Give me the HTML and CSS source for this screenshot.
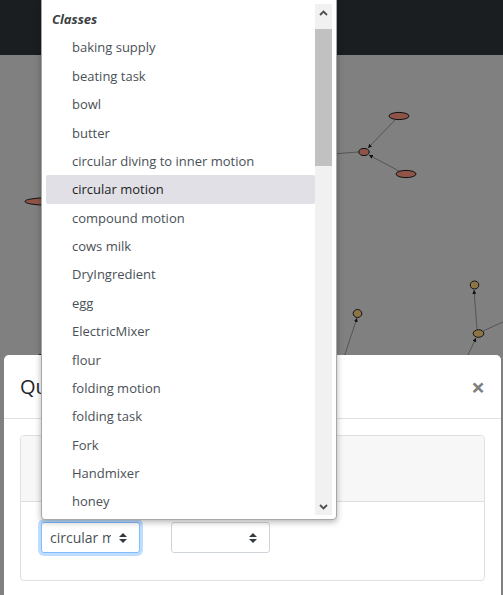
FILE: index.html
```html
<!DOCTYPE html>
<html lang="en">
<head>
<meta charset="utf-8">
<title>Query</title>
<link rel="stylesheet" href="styles.css">
</head>
<body>
<div class="app">
  <header class="navbar"></header>
  <main class="canvas">
    <svg class="graph" width="503" height="540" viewBox="0 55 503 540">
      <defs>
        <marker id="arr" viewBox="0 0 6 6" refX="6" refY="3" markerWidth="4" markerHeight="4" orient="auto">
          <path d="M0 0L6 3L0 6z" fill="#111"/>
        </marker>
      </defs>
      <g class="edges">
        <line x1="395" y1="120" x2="368" y2="148" marker-end="url(#arr)"/>
        <line x1="399" y1="171" x2="369" y2="155" marker-end="url(#arr)"/>
        <line x1="358" y1="152" x2="320" y2="155"/>
        <line x1="344" y1="357" x2="357" y2="318" marker-end="url(#arr)"/>
        <line x1="477" y1="329" x2="474" y2="290" marker-end="url(#arr)"/>
        <line x1="483" y1="331" x2="505" y2="321"/>
        <line x1="467" y1="357" x2="476" y2="338" marker-end="url(#arr)"/>
      </g>
      <g class="nodes">
        <ellipse class="brown" cx="399" cy="116" rx="10" ry="3.6"/>
        <ellipse class="brown" cx="364" cy="152" rx="5.3" ry="3.6"/>
        <ellipse class="brown" cx="406" cy="174" rx="10" ry="3.6"/>
        <ellipse class="brown" cx="46" cy="201.5" rx="21" ry="3.6"/>
        <ellipse class="green" cx="50" cy="358" rx="14" ry="5"/>
        <ellipse class="olive" cx="357.5" cy="313.5" rx="4.3" ry="4"/>
        <ellipse class="olive" cx="474.5" cy="285" rx="4.3" ry="4"/>
        <ellipse class="olive" cx="478.5" cy="333.5" rx="5.3" ry="3.8"/>
      </g>
    </svg>
  </main>
</div>

<div class="modal">
  <div class="modal-header">
    <h5 class="modal-title">Query Builder</h5>
    <span class="close">×</span>
  </div>
  <div class="modal-body">
    <div class="card">
      <div class="card-header"></div>
      <div class="card-body">
        <div class="select focused">
          <span class="select-text">circular motion</span>
          <svg class="select-arrow" width="8" height="10" viewBox="0 0 4 5"><path d="M2 0L0 2h4zm0 5L0 3h4z" fill="#343a40"/></svg>
        </div>
        <div class="select">
          <span class="select-text"></span>
          <svg class="select-arrow" width="8" height="10" viewBox="0 0 4 5"><path d="M2 0L0 2h4zm0 5L0 3h4z" fill="#343a40"/></svg>
        </div>
      </div>
    </div>
  </div>
</div>

<div class="dropdown">
  <div class="list">
    <div class="group">Classes</div>
    <div class="opt">baking supply</div>
    <div class="opt">beating task</div>
    <div class="opt">bowl</div>
    <div class="opt">butter</div>
    <div class="opt">circular diving to inner motion</div>
    <div class="opt selected">circular motion</div>
    <div class="opt">compound motion</div>
    <div class="opt">cows milk</div>
    <div class="opt">DryIngredient</div>
    <div class="opt">egg</div>
    <div class="opt">ElectricMixer</div>
    <div class="opt">flour</div>
    <div class="opt">folding motion</div>
    <div class="opt">folding task</div>
    <div class="opt">Fork</div>
    <div class="opt">Handmixer</div>
    <div class="opt">honey</div>
    <div class="opt">ingredient</div>
  </div>
  <div class="scrollbar">
    <div class="sb-btn">
      <svg width="9" height="6" viewBox="0 0 9 6"><path d="M1 5L4.5 1.5L8 5" fill="none" stroke="#505050" stroke-width="1.8"/></svg>
    </div>
    <div class="sb-track"><div class="sb-thumb"></div></div>
    <div class="sb-btn">
      <svg width="9" height="6" viewBox="0 0 9 6"><path d="M1 1L4.5 4.5L8 1" fill="none" stroke="#505050" stroke-width="1.8"/></svg>
    </div>
  </div>
</div>
</body>
</html>
```

FILE: styles.css
```css
* { box-sizing: border-box; }
html, body {
  margin: 0;
  padding: 0;
  width: 503px;
  height: 595px;
  overflow: hidden;
  font-family: "Open Sans", "Noto Sans", sans-serif;
  color: #212529;
}
.app {
  display: flex;
  flex-direction: column;
  height: 595px;
}
.navbar {
  height: 55px;
  background: #1b1e21;
  flex: none;
}
.canvas {
  flex: 1;
  background: #808080;
  overflow: hidden;
}
.graph { display: block; }
.edges line {
  stroke: #555;
  stroke-width: 1;
}
.nodes ellipse {
  stroke: #111;
  stroke-width: 1;
}
.brown { fill: #8f5447; }
.olive { fill: #8c7445; }
.green { fill: #5d8a3c; }

/* modal */
.modal {
  position: absolute;
  left: 4px;
  top: 355px;
  width: 497px;
  height: 260px;
  background: #fff;
  border-radius: 5px 5px 0 0;
}
.modal-header {
  display: flex;
  align-items: center;
  justify-content: space-between;
  padding: 16px;
  border-bottom: 1px solid #dee2e6;
  height: 64px;
}
.modal-title {
  margin: 0;
  font-size: 20px;
  font-weight: 400;
  line-height: 30px;
  color: #212529;
}
.close {
  font-size: 24px;
  font-weight: 700;
  color: #808080;
  line-height: 1;
}
.modal-body {
  padding: 16px;
}
.card {
  border: 1px solid #dfdfdf;
  border-radius: 4px;
  overflow: hidden;
}
.card-header {
  height: 66px;
  background: #f7f7f7;
  border-bottom: 1px solid #dfdfdf;
}
.card-body {
  display: flex;
  gap: 31px;
  padding: 20px 20px 27px;
}
.select {
  position: relative;
  display: flex;
  align-items: center;
  width: 99px;
  height: 31px;
  border: 1px solid #ced4da;
  border-radius: 3px;
  padding: 0 28px 0 8px;
  font-size: 14px;
  color: #495057;
  background: #fff;
}
.select.focused {
  border-color: #80bdff;
  box-shadow: 0 0 0 3px rgba(0, 123, 255, 0.25);
}
.select-text {
  white-space: nowrap;
  overflow: hidden;
  flex: 1;
}
.select-arrow {
  position: absolute;
  right: 12px;
  top: 10px;
}

/* dropdown popup */
.dropdown {
  position: absolute;
  left: 41px;
  top: -1px;
  width: 296px;
  height: 521px;
  display: flex;
  padding: 4px;
  background: #fff;
  border: 1px solid #a7a7a7;
  border-radius: 0 0 4px 4px;
  box-shadow: 0 2px 6px rgba(0, 0, 0, 0.3);
}
.list {
  width: 269px;
  overflow: hidden;
  padding-top: 1px;
  font-size: 13px;
  color: #495057;
}
.group, .opt {
  height: 28.375px;
  line-height: 27.375px;
  padding-top: 1px;
  white-space: nowrap;
}
.group {
  padding-left: 6px;
  font-weight: 700;
  font-style: italic;
  color: #3c3f44;
}
.opt { padding-left: 26px; }
.opt.selected {
  background: #e0e0e6;
  border-radius: 2px;
  color: #1e1e1e;
}
.scrollbar {
  width: 17px;
  display: flex;
  flex-direction: column;
  background: #f1f1f1;
}
.sb-btn {
  height: 17px;
  display: flex;
  align-items: center;
  justify-content: center;
  flex: none;
}
.sb-track {
  flex: 1;
  padding-top: 8px;
}
.sb-thumb {
  height: 137px;
  background: #c1c1c1;
}
```
